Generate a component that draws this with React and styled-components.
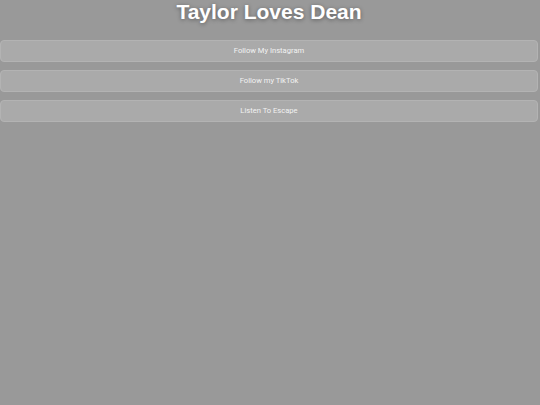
import React from 'react'
import styled, {createGlobalStyle} from 'styled-components'

const GlobalStyle = createGlobalStyle`
    html, body {
        margin: 0;
        padding: 0;
        background: #999999;
        height: 100%;
    }
    body {
        font-family: "Liberation Sans", Arial, sans-serif;
    }
`;

const links = [
    'Follow My Instagram',
    'Follow my TikTok',
    'Listen To Escape',
];

const App = () => {
    return (
        <Page>
            <GlobalStyle/>
            <Title>Taylor Loves Dean</Title>
            <LinkList>
                {links.map(label => (
                    <LinkButton key={label}>{label}</LinkButton>
                ))}
            </LinkList>
        </Page>
    )
};

export default App

const Page = styled.div`
    box-sizing: border-box;
    width: 100%;
    min-height: 405px;
    background: #999999;
    padding-right: 2px;
`;

const Title = styled.h1`
    margin: 0;
    height: 40px;
    font-size: 21px;
    line-height: 24px;
    font-weight: bold;
    text-align: center;
    color: #ffffff;
    text-shadow: 0 1px 4px rgba(0, 0, 0, 0.4);
`;

const LinkList = styled.div`
    display: flex;
    flex-direction: column;
    gap: 8px;
`;

const LinkButton = styled.div`
    box-sizing: border-box;
    width: 100%;
    height: 22px;
    padding-bottom: 2px;
    display: flex;
    align-items: center;
    justify-content: center;
    background: #aaaaaa;
    border: 1px solid #b3b3b3;
    border-radius: 4px;
    color: #f2f2f2;
    font-family: Roboto, "Liberation Sans", sans-serif;
    font-size: 7.6px;
`;
